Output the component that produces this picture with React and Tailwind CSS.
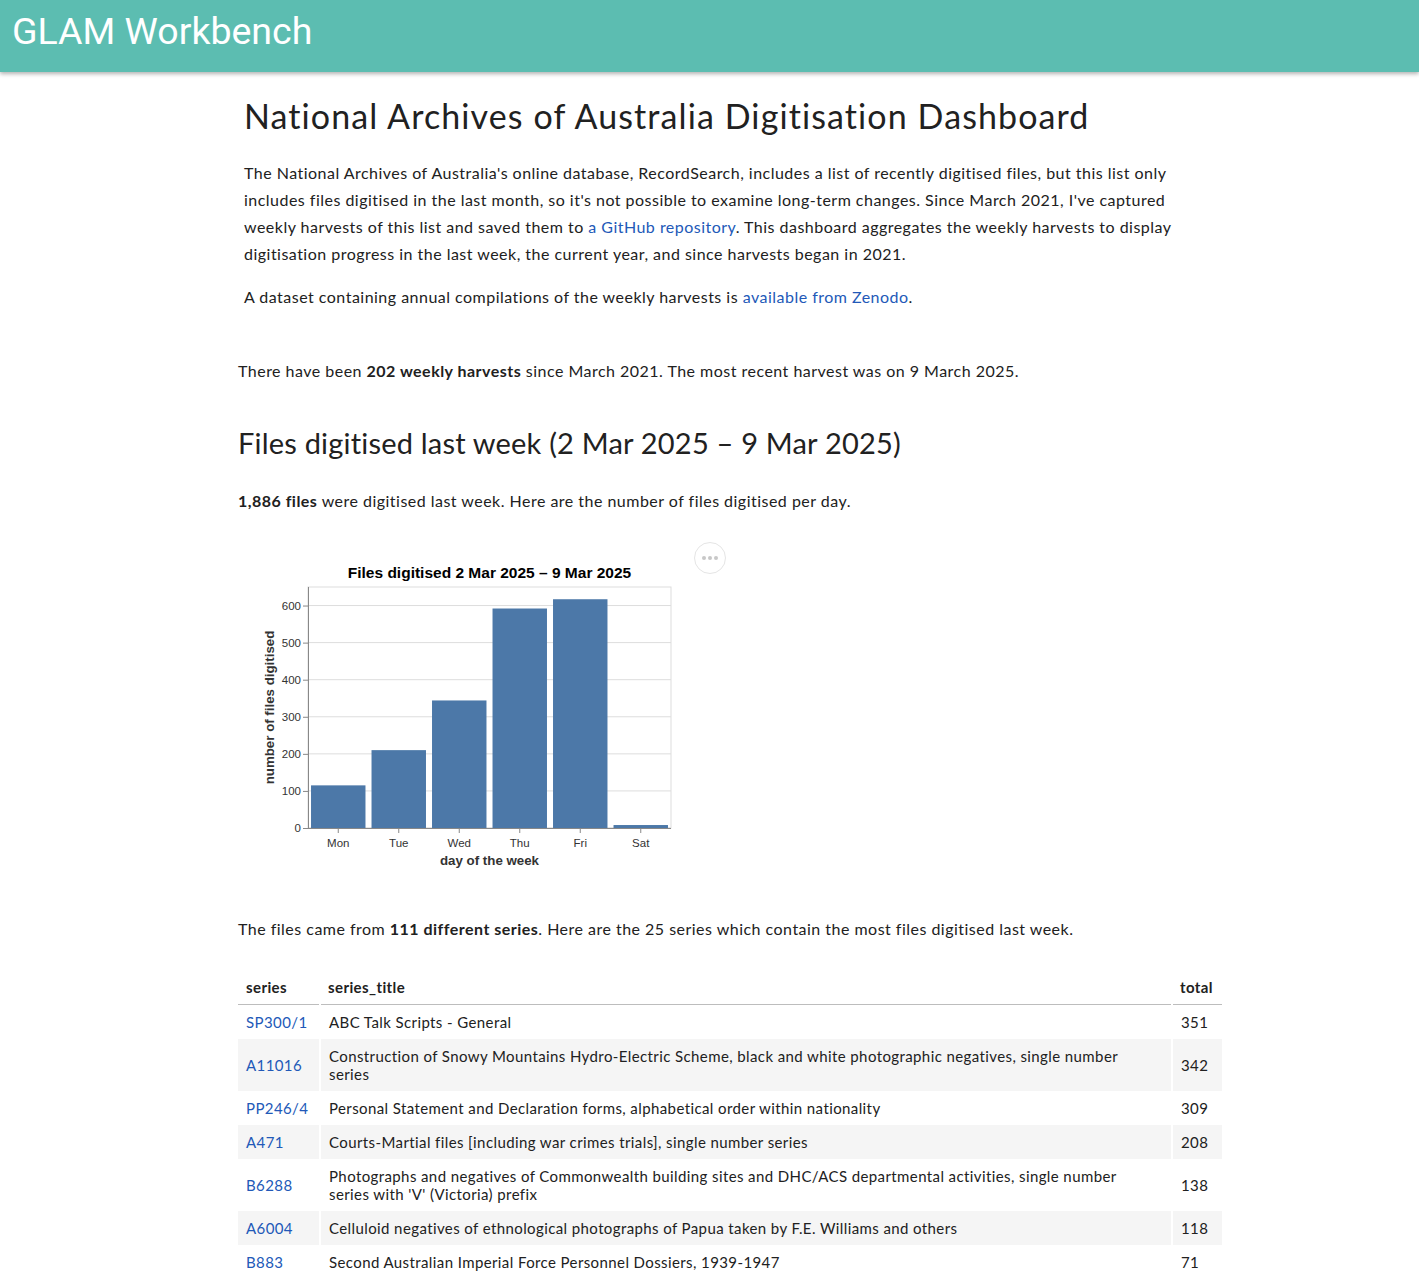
import React from "react";

const FONT = { fontFamily: "Lato, 'Open Sans', sans-serif" };

const days = [
  { d: "Mon", v: 115 },
  { d: "Tue", v: 210 },
  { d: "Wed", v: 344 },
  { d: "Thu", v: 592 },
  { d: "Fri", v: 617 },
  { d: "Sat", v: 8 },
];

function Chart() {
  const left = 70, right = 433, top = 47, bottom = 288;
  const k = (bottom - top) / 650;
  const step = (right - left) / 6;
  const bw = step * 0.9;
  const y = (v) => bottom - v * k;
  const ticks = [0, 100, 200, 300, 400, 500, 600];
  return (
    <div className="relative w-[500px] h-[340px]">
      <svg width="500" height="340" viewBox="0 0 500 340" style={{ fontFamily: "'Liberation Sans', Arial, sans-serif" }}>
        <rect x={left} y={top} width={right - left} height={bottom - top} fill="white" stroke="#ddd" />
        {ticks.map((t) => (
          <line key={t} x1={left} x2={right} y1={y(t)} y2={y(t)} stroke="#ddd" />
        ))}
        {days.map((b, i) => (
          <rect key={b.d} x={left + step * i + step * 0.05} y={y(b.v)} width={bw} height={b.v * k} fill="#4c78a8" />
        ))}
        <line x1={left + 0.5} x2={left + 0.5} y1={top} y2={bottom} stroke="#888" />
        <line x1={left} x2={right} y1={bottom + 0.5} y2={bottom + 0.5} stroke="#888" />
        {ticks.map((t) => (
          <g key={t}>
            <line x1={left - 5} x2={left} y1={y(t) + 0.5} y2={y(t) + 0.5} stroke="#888" />
            <text x={left - 7} y={y(t) + 4} fontSize="11.5" fill="#333" textAnchor="end">{t}</text>
          </g>
        ))}
        {days.map((b, i) => {
          const cx = left + step * i + step / 2;
          return (
            <g key={b.d}>
              <line x1={cx} x2={cx} y1={bottom} y2={bottom + 5} stroke="#888" />
              <text x={cx} y={bottom + 19} fontSize="11.5" fill="#333" textAnchor="middle">{b.d}</text>
            </g>
          );
        })}
        <text x={(left + right) / 2} y={325} fontSize="13.3" fontWeight="bold" fill="#333" textAnchor="middle">day of the week</text>
        <text x={0} y={0} fontSize="13.3" fontWeight="bold" fill="#333" textAnchor="middle" transform={`translate(36 ${(top + bottom) / 2}) rotate(-90)`}>number of files digitised</text>
        <text x={(left + right) / 2} y={38} fontSize="15.5" fontWeight="bold" fill="#000" textAnchor="middle">Files digitised 2 Mar 2025 – 9 Mar 2025</text>
      </svg>
      <div className="absolute left-[456px] top-[2px] w-[32px] h-[32px] rounded-full border border-[#e5e5e5] bg-white flex items-center justify-center gap-[2px]">
        <span className="w-[4px] h-[4px] rounded-full bg-[#c8c8c8]" />
        <span className="w-[4px] h-[4px] rounded-full bg-[#c8c8c8]" />
        <span className="w-[4px] h-[4px] rounded-full bg-[#c8c8c8]" />
      </div>
    </div>
  );
}

const rows = [
  ["SP300/1", "ABC Talk Scripts - General", "351"],
  ["A11016", <>Construction of Snowy Mountains Hydro-Electric Scheme, black and white photographic negatives, single number<br />series</>, "342"],
  ["PP246/4", "Personal Statement and Declaration forms, alphabetical order within nationality", "309"],
  ["A471", "Courts-Martial files [including war crimes trials], single number series", "208"],
  ["B6288", <>Photographs and negatives of Commonwealth building sites and DHC/ACS departmental activities, single number<br />series with 'V' (Victoria) prefix</>, "138"],
  ["A6004", "Celluloid negatives of ethnological photographs of Papua taken by F.E. Williams and others", "118"],
  ["B883", "Second Australian Imperial Force Personnel Dossiers, 1939-1947", "71"],
  ["A1200", "Photographs, single number series", "60"],
];

const LINK = "text-[#2259b8]";

export default function App() {
  return (
    <div className="min-h-screen bg-white text-[#212121]" style={FONT}>
      <header className="h-[72px] bg-[#5cbdb1] shadow-[0_2px_4px_rgba(0,0,0,0.3)] flex items-center px-[12px] pb-[8px]">
        <span className="text-white text-[37.5px] leading-none" style={{ fontFamily: "Roboto, 'Liberation Sans', sans-serif" }}>GLAM Workbench</span>
      </header>
      <main className="ml-[238px] w-[984px] pb-10">
        <div className="pl-[6px]">
          <h1 className="mt-[24px] text-[34px] leading-[40px] tracking-[1.1px]">National Archives of Australia Digitisation Dashboard</h1>
          <p className="mt-[23px] text-[16px] leading-[27px] tracking-[0.48px]">
            The National Archives of Australia's online database, RecordSearch, includes a list of recently digitised files, but this list only<br />
            includes files digitised in the last month, so it's not possible to examine long-term changes. Since March 2021, I've captured<br />
            weekly harvests of this list and saved them to <span className={LINK}>a GitHub repository</span>. This dashboard aggregates the weekly harvests to display<br />
            digitisation progress in the last week, the current year, and since harvests began in 2021.
          </p>
          <p className="mt-[16px] text-[16px] leading-[27px] tracking-[0.48px]">
            A dataset containing annual compilations of the weekly harvests is <span className={LINK}>available from Zenodo</span>.
          </p>
        </div>
        <p className="mt-[47px] text-[16px] leading-[27px] tracking-[0.48px]">
          There have been <b>202 weekly harvests</b> since March 2021. The most recent harvest was on 9 March 2025.
        </p>
        <h2 className="mt-[41px] text-[29px] leading-[36px] tracking-[0.2px]">Files digitised last week (2 Mar 2025 – 9 Mar 2025)</h2>
        <p className="mt-[26px] text-[16px] leading-[27px] tracking-[0.48px]">
          <b>1,886 files</b> were digitised last week. Here are the number of files digitised per day.
        </p>
        <div className="mt-[26px]">
          <Chart />
        </div>
        <p className="mt-[35px] text-[16px] leading-[27px] tracking-[0.48px]">
          The files came from <b>111 different series</b>. Here are the 25 series which contain the most files digitised last week.
        </p>
        <table className="mt-[28px] w-full border-collapse text-[15px] leading-[18px] tracking-[0.4px]">
          <thead>
            <tr className="border-b border-[#bdbdbd]">
              <th className="text-left font-bold px-[8px] h-[34px] w-[82px]">series</th>
              <th className="text-left font-bold px-[8px] h-[34px]">series_title</th>
              <th className="text-left font-bold px-[8px] h-[34px] w-[50px]">total</th>
            </tr>
          </thead>
          <tbody>
            {rows.map((r, i) => (
              <tr key={i} className={i % 2 === 1 ? "bg-[#f5f5f5]" : ""}>
                <td className={`px-[8px] py-[8px] border-r-2 border-white ${LINK}`}>{r[0]}</td>
                <td className="px-[8px] py-[8px] border-r-2 border-white">{r[1]}</td>
                <td className="px-[8px] py-[8px]">{r[2]}</td>
              </tr>
            ))}
          </tbody>
        </table>
      </main>
    </div>
  );
}
